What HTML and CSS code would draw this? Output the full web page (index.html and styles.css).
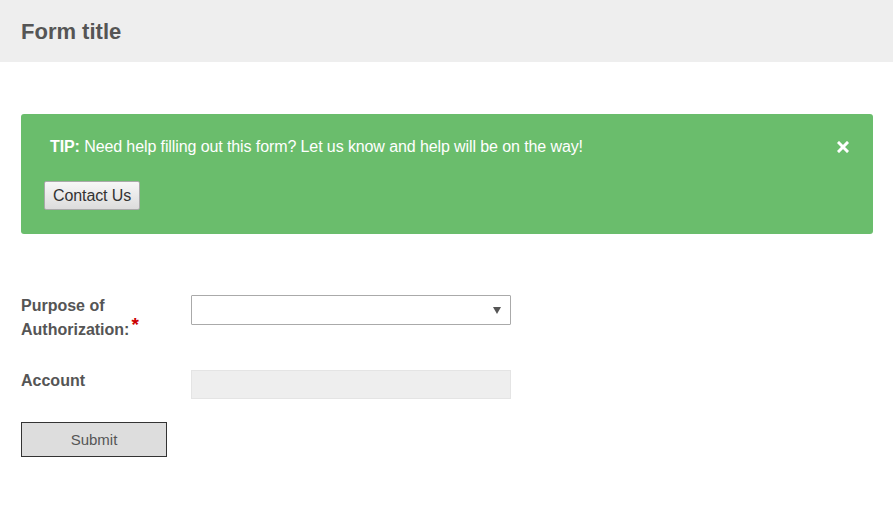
FILE: index.html
```html
<!DOCTYPE html>
<html lang="en">
<head>
  <meta charset="UTF-8">
  <title>Form title</title>
  <link rel="stylesheet" href="styles.css">
</head>
<body>

  <div class="header">
    <h1>Form title</h1>
  </div>

  <div class="content">
    <div class="tip">
      <div class="tip-row">
        <p><strong>TIP:</strong> Need help filling out this form? Let us know and help will be on the way!</p>
        <span class="tip-close" aria-label="Close">
          <svg width="12" height="12" viewBox="0 0 12 12">
            <path d="M2 2 L10 10 M10 2 L2 10" stroke="#fff" stroke-width="3" stroke-linecap="square"/>
          </svg>
        </span>
      </div>
      <button type="button" class="contact">Contact Us</button>
    </div>

    <form class="auth-form">
      <div class="row">
        <label for="purpose">Purpose of Authorization:<span class="req">*</span></label>
        <div class="select-wrap">
          <select id="purpose" name="purpose">
            <option></option>
          </select>
        </div>
      </div>
      <div class="row">
        <label for="account">Account</label>
        <input type="text" id="account" name="account" disabled>
      </div>
      <button type="submit" class="submit">Submit</button>
    </form>
  </div>

</body>
</html>
```

FILE: styles.css
```css
body {
  margin: 0;
  font-family: "Liberation Sans", Arial, sans-serif;
  color: #555;
  background: #fff;
}
.header {
  background: #eee;
  height: 62px;
  display: flex;
  align-items: center;
  padding-left: 21px;
}
.header h1 {
  margin: 0;
  padding-top: 2px;
  font-size: 22px;
  font-weight: bold;
  color: #555;
}
.content {
  padding: 52px 20px 0 21px;
}
.tip {
  background: #6abd6c;
  border-radius: 3px;
  padding: 23px 24px 24px 23px;
  color: #fff;
}
.tip-row {
  display: flex;
  justify-content: space-between;
  align-items: center;
}
.tip p {
  margin: 0;
  padding-left: 6px;
  font-size: 16px;
  line-height: 20px;
  letter-spacing: -0.1px;
}
.tip-close {
  display: flex;
  width: 12px;
  height: 12px;
}
.contact {
  margin-top: 24px;
  height: 29px;
  padding: 0 8px;
  font-family: "Liberation Sans", Arial, sans-serif;
  font-size: 16px;
  letter-spacing: -0.1px;
  color: #333;
  background: linear-gradient(#f7f7f7, #dcdcdc);
  border: 1px solid #a9a9a9;
  border-radius: 2px;
}
.auth-form {
  margin-top: 60px;
}
.row {
  display: flex;
  align-items: flex-start;
  margin-bottom: 27px;
}
.row + .row {
  margin-bottom: 23px;
}
.row label {
  width: 140px;
  margin-right: 30px;
  font-weight: bold;
  font-size: 16px;
  line-height: 24px;
  color: #555;
}
.req {
  color: #c00;
  font-size: 19px;
  margin-left: 2px;
  vertical-align: top;
  position: relative;
  top: -5px;
}
.select-wrap {
  position: relative;
  margin-top: 1px;
}
.select-wrap select {
  appearance: none;
  -webkit-appearance: none;
  width: 320px;
  height: 30px;
  border: 1px solid #aaa;
  border-radius: 1px;
  background: #fff;
  display: block;
}
.select-wrap::after {
  content: "";
  position: absolute;
  right: 10px;
  top: 12px;
  border-left: 4px solid transparent;
  border-right: 4px solid transparent;
  border-top: 7px solid #555;
}
.row input {
  width: 320px;
  height: 29px;
  margin-top: 1px;
  box-sizing: border-box;
  background: #eee;
  border: 1px solid #e4e4e4;
}
.submit {
  width: 146px;
  height: 35px;
  background: #ddd;
  border: 1px solid #333;
  font-family: "Liberation Sans", Arial, sans-serif;
  font-size: 15px;
  color: #555;
}
```
